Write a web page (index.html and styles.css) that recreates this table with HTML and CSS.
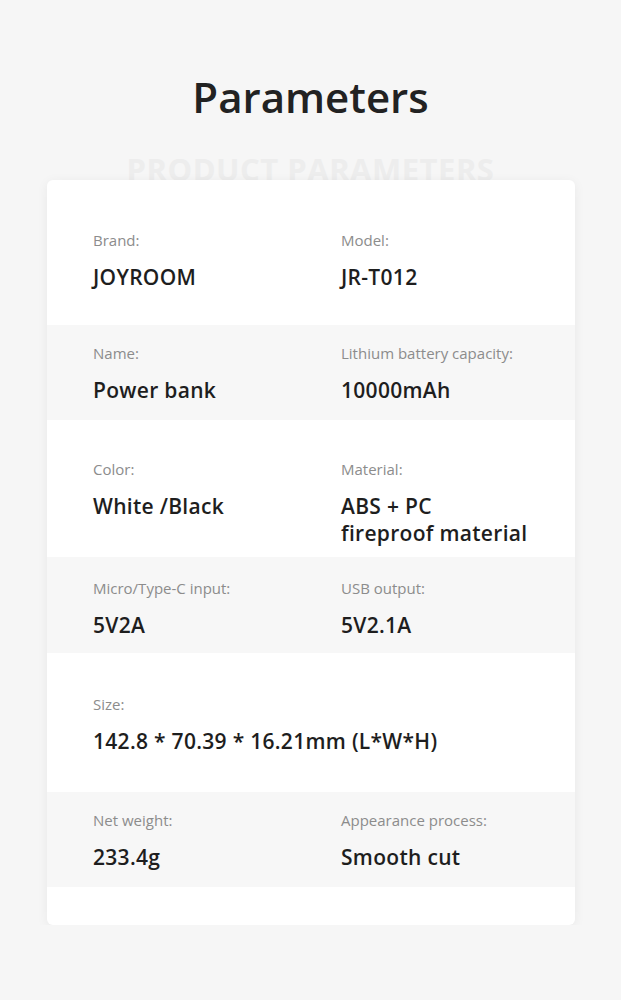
FILE: index.html
```html
<!DOCTYPE html>
<html lang="en">
<head>
    <meta charset="UTF-8">
    <meta name="viewport" content="width=device-width, initial-scale=1.0">
    <title>Parameters</title>
    <link rel="stylesheet" href="styles.css">
</head>
<body>
    <h1 class="title">Parameters</h1>
    <p class="watermark">PRODUCT PARAMETERS</p>
    <div class="card">
        <div class="row first">
            <div class="item">
                <span class="label">Brand:</span>
                <span class="value">JOYROOM</span>
            </div>
            <div class="item">
                <span class="label">Model:</span>
                <span class="value">JR-T012</span>
            </div>
        </div>
        <div class="row gray">
            <div class="item">
                <span class="label">Name:</span>
                <span class="value">Power bank</span>
            </div>
            <div class="item">
                <span class="label">Lithium battery capacity:</span>
                <span class="value">10000mAh</span>
            </div>
        </div>
        <div class="row third">
            <div class="item">
                <span class="label">Color:</span>
                <span class="value">White /Black</span>
            </div>
            <div class="item">
                <span class="label">Material:</span>
                <span class="value">ABS + PC<br>fireproof material</span>
            </div>
        </div>
        <div class="row gray fourth">
            <div class="item">
                <span class="label">Micro/Type-C input:</span>
                <span class="value">5V2A</span>
            </div>
            <div class="item">
                <span class="label">USB output:</span>
                <span class="value">5V2.1A</span>
            </div>
        </div>
        <div class="row fifth">
            <div class="item wide">
                <span class="label">Size:</span>
                <span class="value">142.8 * 70.39 * 16.21mm (L*W*H)</span>
            </div>
        </div>
        <div class="row gray">
            <div class="item">
                <span class="label">Net weight:</span>
                <span class="value">233.4g</span>
            </div>
            <div class="item">
                <span class="label">Appearance process:</span>
                <span class="value">Smooth cut</span>
            </div>
        </div>
    </div>
</body>
</html>
```

FILE: styles.css
```css
body{
    margin: 0;
    padding: 71px 0 0;
    background: #f6f6f6;
    font-family: "Open Sans", "Noto Sans", sans-serif;
    color: #1e1e1e;
}
.title{
    margin: 0;
    text-align: center;
    font-size: 42px;
    line-height: 52px;
    font-weight: 600;
    color: #222;
}
.watermark{
    margin: 28px 0 -7px;
    text-align: center;
    font-size: 31px;
    line-height: 36px;
    font-weight: 700;
    color: #ededed;
    letter-spacing: 0.5px;
}
.card{
    position: relative;
    width: 528px;
    margin: 0 auto 0 47px;
    padding-bottom: 38px;
    background: #fff;
    border-radius: 6px;
    box-shadow: 0 2px 12px rgba(0, 0, 0, 0.06);
}
.row{
    display: grid;
    grid-template-columns: 248px 1fr;
    padding: 18px 0 16px 46px;
}
.row.gray{
    background: #f7f7f7;
}
.row.first{
    padding-top: 50px;
    padding-bottom: 34px;
}
.row.third{
    padding-top: 39px;
    padding-bottom: 10px;
}
.row.fourth{
    padding-top: 21px;
    padding-bottom: 14px;
}
.row.fifth{
    padding-top: 41px;
    padding-bottom: 37px;
}
.item{
    display: flex;
    flex-direction: column;
    gap: 14px;
}
.item.wide{
    grid-column: 1 / 3;
}
.label{
    font-size: 15px;
    line-height: 20px;
    color: #8c8c8c;
}
.value{
    font-size: 21px;
    line-height: 27px;
    font-weight: 600;
    letter-spacing: 0.3px;
    color: #1e1e1e;
}
```
